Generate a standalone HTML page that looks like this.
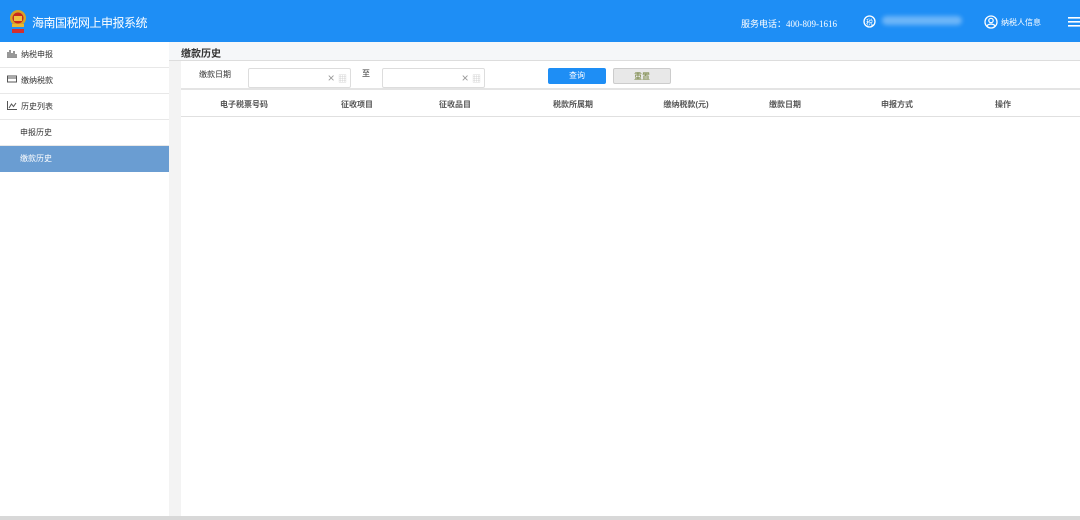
<!DOCTYPE html>
<html><head><meta charset="utf-8"><style>
*{margin:0;padding:0;box-sizing:border-box}
body{width:1080px;height:520px;overflow:hidden;background:#fff;font-family:"Liberation Sans","Noto Sans CJK SC",sans-serif;font-size:9px;color:#333;position:relative}
.hd{position:absolute;left:0;top:0;width:1080px;height:42px;background:#1e8ef5;color:#fff}
.logo{position:absolute;left:8px;top:9px;width:20px;height:26px}
.title{position:absolute;left:32px;top:14px;font-size:12px;letter-spacing:-0.5px}
.phone{position:absolute;left:741px;top:17px;font-size:9px}
.side{position:absolute;left:0;top:42px;width:169px;height:475px;background:#fff}
.side div{height:26px;line-height:26px;border-bottom:1px solid #e8e8e8;padding-left:21px;font-size:8px;position:relative}
.side .sub{padding-left:20px}
.side .sel{background:#6a9dd2;color:#fff;border:none}
.ico{position:absolute;left:7px;top:7px;width:10px;height:9px}
.gap{position:absolute;left:169px;top:42px;width:12px;height:475px;background:#f3f3f3}
.ttl{position:absolute;left:169px;top:42px;width:911px;height:19px;background:#f5f7f9;border-bottom:1px solid #ddd;font-size:10px;font-weight:bold;padding:3px 0 0 12px}
.flt{position:absolute;left:181px;top:62px;width:899px;height:28px;background:#fff;border-bottom:2px solid #e4e4e4}
.inp{position:absolute;top:6px;width:103px;height:20px;border:1px solid #ddd;border-radius:2px;background:#fff}
.inp span{position:absolute;right:3px;top:2px;color:#999;font-size:12px}
.btn{position:absolute;top:6px;width:58px;height:16px;border-radius:2px;text-align:center;line-height:16px;font-size:8px}
.th{position:absolute;left:181px;top:91px;width:899px;height:26px;border-bottom:1px solid #e0e0e0;background:#fff}
.th span{position:absolute;top:8px;font-size:8px;font-weight:bold;color:#555;transform:translateX(-50%)}
.bot{position:absolute;left:0;top:516px;width:1080px;height:4px;background:#d8d8d8}
</style></head><body>
<div class="hd">
<svg class="logo" viewBox="0 0 20 26"><circle cx="10" cy="9" r="8" fill="#d7a326"/><circle cx="10" cy="9" r="5.5" fill="#c8281e"/><rect x="6" y="7" width="8" height="5" fill="#f0c040"/><rect x="4" y="15" width="12" height="3" fill="#e8b830"/><rect x="4" y="20" width="12" height="4" fill="#d32f2f"/></svg>
<div class="title">海南国税网上申报系统</div>
<div class="phone">服务电话：<span style="font-family:'Liberation Serif',serif">400-809-1616</span></div>
<svg style="position:absolute;left:863px;top:15px" width="13" height="13"><circle cx="6.5" cy="6.5" r="5.5" fill="none" stroke="#fff" stroke-width="1.3"/><text x="6.5" y="9.5" font-size="7" fill="#fff" text-anchor="middle">税</text></svg>
<div style="position:absolute;left:882px;top:16px;width:80px;height:9px;background:rgba(255,255,255,.35);border-radius:5px;filter:blur(2px)"></div>
<svg style="position:absolute;left:984px;top:15px" width="14" height="14"><circle cx="7" cy="7" r="6" fill="none" stroke="#fff" stroke-width="1.3"/><circle cx="7" cy="5.5" r="2.2" fill="none" stroke="#fff" stroke-width="1.2"/><path d="M3 11c1-2.5 7-2.5 8 0" fill="none" stroke="#fff" stroke-width="1.2"/></svg>
<div style="position:absolute;left:1001px;top:17px;font-size:8px">纳税人信息</div>
<svg style="position:absolute;left:1068px;top:17px" width="12" height="10"><rect y="0" width="12" height="1.6" fill="#fff"/><rect y="4" width="12" height="1.6" fill="#fff"/><rect y="8" width="12" height="1.6" fill="#fff"/></svg>
</div>
<div class="side">
<div><svg class="ico" viewBox="0 0 10 9"><path d="M0 9h10M1 8V3M3 8V1M5 8V4M7 8V2M9 8V5" stroke="#555" stroke-width="1.2"/></svg>纳税申报</div>
<div><svg class="ico" viewBox="0 0 10 9"><rect x="0.5" y="1" width="9" height="6" fill="none" stroke="#555"/><path d="M0.5 3h9" stroke="#555"/></svg>缴纳税款</div>
<div><svg class="ico" viewBox="0 0 10 9"><path d="M0.5 0v8.5H10M2 7l2.5-4 2 2.5L9 2" fill="none" stroke="#555"/></svg>历史列表</div>
<div class="sub">申报历史</div>
<div class="sub sel">缴款历史</div>
</div>
<div class="gap"></div>
<div class="ttl">缴款历史</div>
<div class="flt">
<div style="position:absolute;left:18px;top:7px;font-size:8px">缴款日期</div>
<div class="inp" style="left:67px"><span>× <small style="font-size:9px;color:#ccc">▦</small></span></div>
<div style="position:absolute;left:181px;top:6px;font-size:8px">至</div>
<div class="inp" style="left:201px"><span>× <small style="font-size:9px;color:#ccc">▦</small></span></div>
<div class="btn" style="left:367px;background:#1e8ef5;color:#fff">查询</div>
<div class="btn" style="left:432px;background:#e8e8e8;border:1px solid #ccc;color:#6a7a30">重置</div>
</div>
<div class="th">
<span style="left:63px">电子税票号码</span>
<span style="left:176px">征收项目</span>
<span style="left:274px">征收品目</span>
<span style="left:392px">税款所属期</span>
<span style="left:505px">缴纳税款(元)</span>
<span style="left:604px">缴款日期</span>
<span style="left:716px">申报方式</span>
<span style="left:822px">操作</span>
</div>
<div class="bot"></div>
</body></html>
